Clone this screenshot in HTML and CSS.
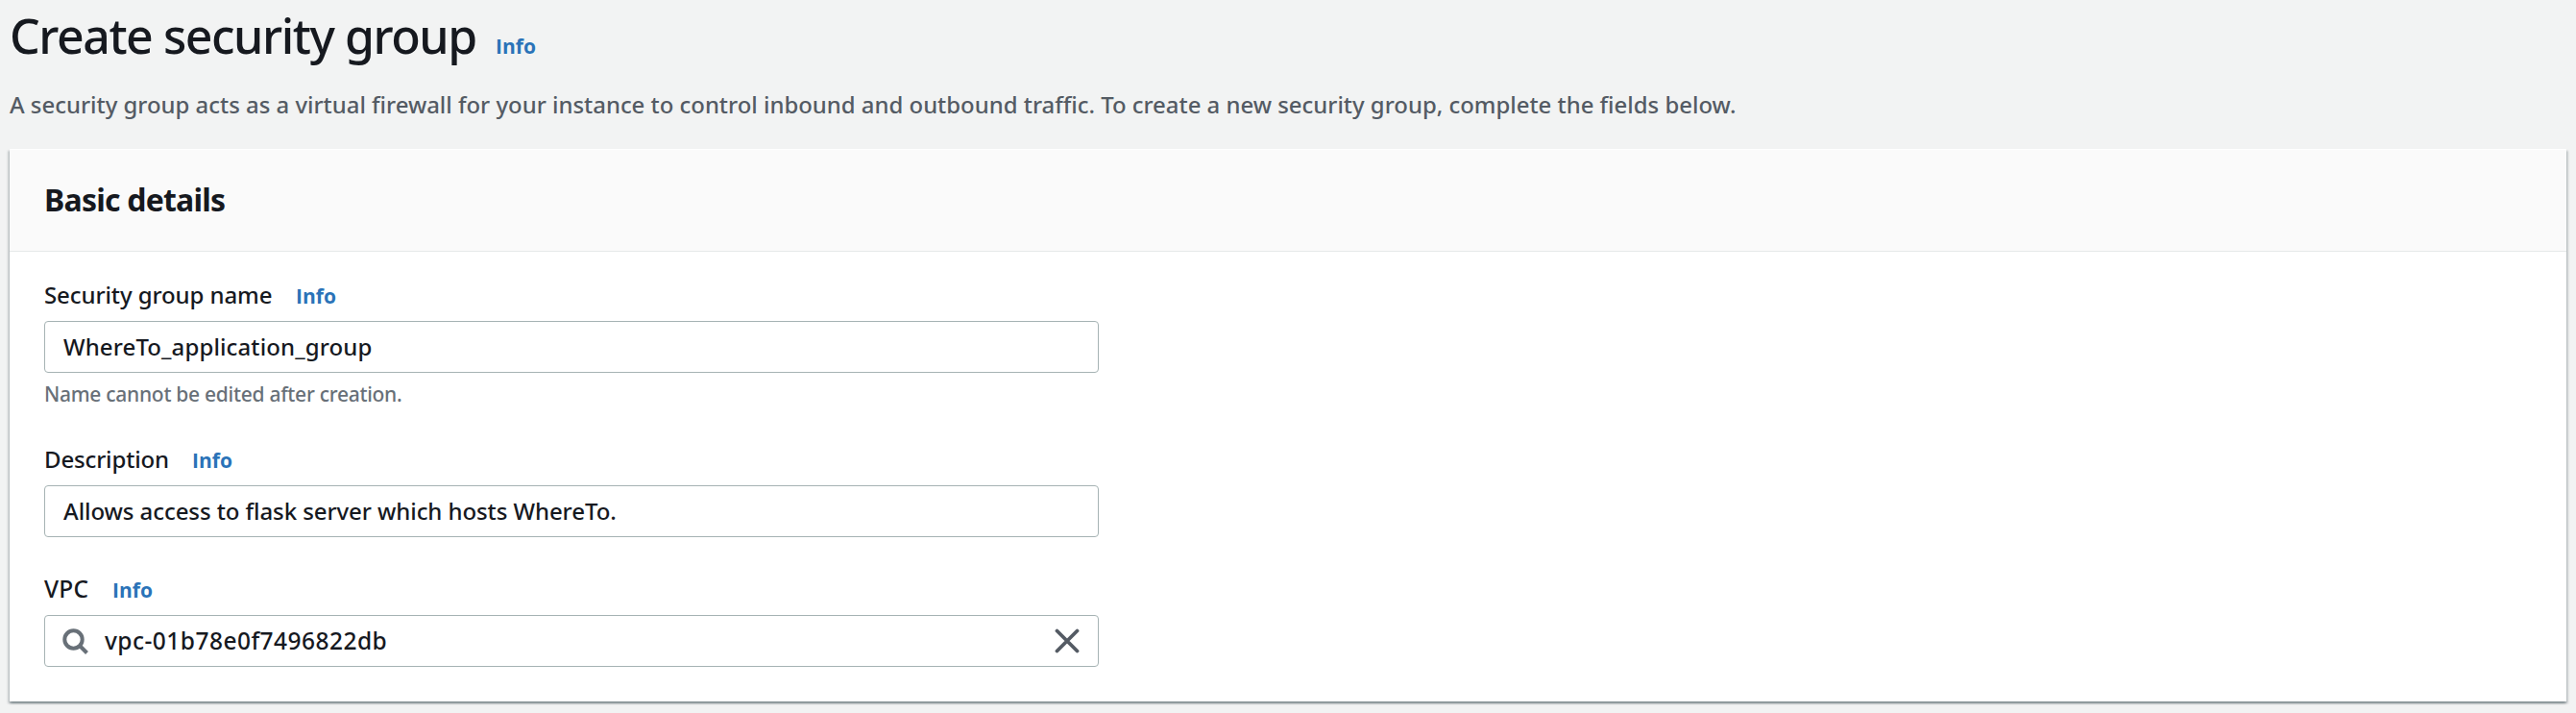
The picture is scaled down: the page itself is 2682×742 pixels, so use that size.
FILE: index.html
```html
<!DOCTYPE html>
<html lang="en">
<head>
<meta charset="utf-8">
<title>Create security group</title>
<link rel="stylesheet" href="styles.css">
</head>
<body>
<main class="page">
  <header class="page-header">
    <div class="title-row">
      <h1 class="title">Create security group</h1>
      <a class="info">Info</a>
    </div>
    <p class="intro">A security group acts as a virtual firewall for your instance to control inbound and outbound traffic. To create a new security group, complete the fields below.</p>
  </header>
  <section class="card">
    <div class="card-header"><h2 class="card-title">Basic details</h2></div>
    <div class="card-body">
      <div class="field">
        <div class="label-row"><span class="label label-name">Security group name</span><a class="info">Info</a></div>
        <div class="input"><span class="value value-name">WhereTo_application_group</span></div>
        <p class="hint">Name cannot be edited after creation.</p>
      </div>
      <div class="field field-description">
        <div class="label-row"><span class="label label-description">Description</span><a class="info">Info</a></div>
        <div class="input"><span class="value value-description">Allows access to flask server which hosts WhereTo.</span></div>
      </div>
      <div class="field field-vpc">
        <div class="label-row"><span class="label label-vpc">VPC</span><a class="info">Info</a></div>
        <div class="input input-search">
          <svg class="search-icon" viewBox="0 0 28 28"><circle cx="11.5" cy="11.5" r="9.2"/><path d="M18 18l7.5 7.5"/></svg>
          <span class="value value-vpc">vpc-01b78e0f7496822db</span>
          <svg class="clear-icon" viewBox="0 0 26 26"><path d="M2.5 2.5l21 21M23.5 2.5l-21 21"/></svg>
        </div>
      </div>
    </div>
  </section>
</main>
</body>
</html>
```
FILE: styles.css
```css
* { box-sizing: border-box; }
body {
  margin: 0;
  background: #f2f3f3;
  color: #16191f;
  font-family: "Noto Sans", "Open Sans", sans-serif;
  font-weight: 500;
  font-size: 24px;
  line-height: 36px;
}
h1, h2, p { margin: 0; }
.page { height: 742px; padding: 7px 10px 0; overflow: hidden; }
.title-row, .label-row { display: flex; align-items: baseline; }
.title-row { height: 60px; }
.title { font-size: 50px; line-height: 60px; font-weight: 500; letter-spacing: -1.45px; width: 506px; white-space: nowrap; }
.info { color: #2a73b8; font: 700 21px/30px "Open Sans", sans-serif; }
.intro { margin-top: 24px; color: #545b64; font-size: 23.92px; white-space: nowrap; }
.card {
  margin-top: 28px;
  height: 575px;
  background: #fff;
  box-shadow: 0 2px 2px rgba(0, 28, 36, .3), 2px 2px 2px rgba(0, 28, 36, .15), -2px 2px 2px rgba(0, 28, 36, .15);
}
.card-header {
  height: 107px;
  padding: 32px 36px 0;
  background: #fafafa;
  border-top: 1px solid #fff;
  border-bottom: 1px solid #e6e9e9;
}
.card-title { font-size: 32px; line-height: 40px; font-weight: 700; letter-spacing: -0.78px; }
.card-body { padding: 27px 36px 0; }
.field { width: 1098px; }
.label-row { height: 36px; margin-bottom: 9px; }
.label { white-space: nowrap; }
.label-name { width: 262px; letter-spacing: -0.1px; }
.label-description { width: 154px; letter-spacing: -0.16px; }
.label-vpc { width: 71px; font-size: 24.5px; letter-spacing: 0.3px; }
.input {
  display: flex;
  align-items: center;
  height: 54px;
  padding: 0 19px;
  border: 1px solid #a6b3b4;
  border-radius: 4px;
}
.input-search { padding-left: 18px; }
.value { white-space: nowrap; }
.value-name { letter-spacing: 0.11px; }
.value-description { letter-spacing: -0.08px; }
.value-vpc { flex: 1; font-size: 24.5px; letter-spacing: 0.46px; }
.hint { margin-top: 7px; color: #687078; font-size: 21px; line-height: 30px; letter-spacing: -0.28px; }
.field-description { margin-top: 35px; }
.field-vpc { margin-top: 36px; }
.search-icon { width: 28px; height: 28px; margin: 1px 16px 0 0; fill: none; stroke: #687078; stroke-width: 4; }
.clear-icon { width: 26px; height: 26px; fill: none; stroke: #545b64; stroke-width: 3.8; stroke-linecap: round; }
```
